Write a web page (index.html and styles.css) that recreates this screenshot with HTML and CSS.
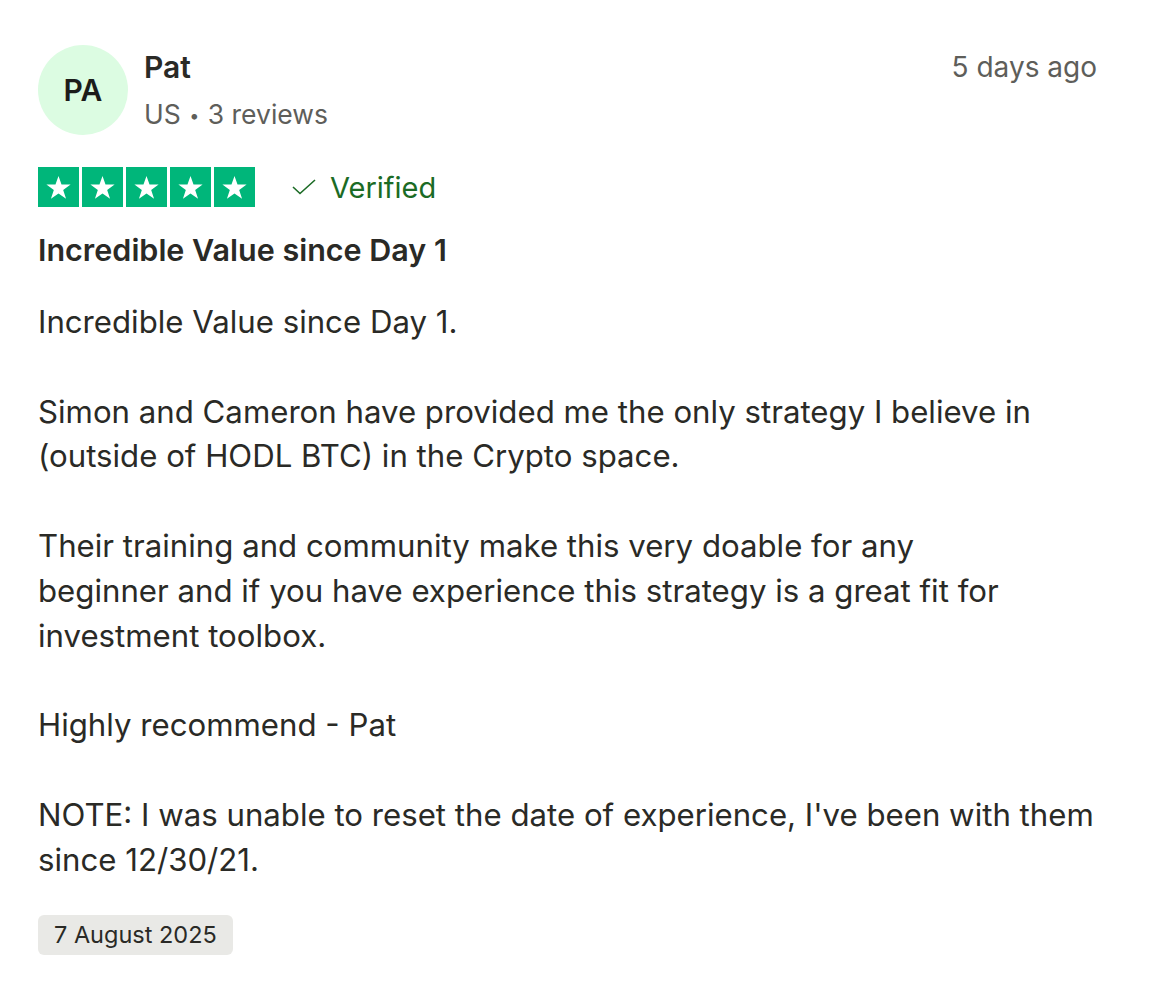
FILE: index.html
```html
<!DOCTYPE html>
<html lang="en">
<head>
<meta charset="utf-8">
<title>Review</title>
<link rel="stylesheet" href="styles.css">
</head>
<body>
<article class="review">
  <header class="head">
    <div class="avatar">PA</div>
    <div class="who">
      <div class="name">Pat</div>
      <div class="meta">US <span class="dot">•</span> 3 reviews</div>
    </div>
    <div class="ago">5 days ago</div>
  </header>
  <div class="rating">
    <div class="stars">
      <span class="star"><svg viewBox="0 0 24 24"><path d="M12 3.6l2.2 6.3h6.6l-5.4 3.9 2.1 6.4L12 16.3l-5.5 3.9 2.1-6.4-5.4-3.9h6.6z"/></svg></span>
      <span class="star"><svg viewBox="0 0 24 24"><path d="M12 3.6l2.2 6.3h6.6l-5.4 3.9 2.1 6.4L12 16.3l-5.5 3.9 2.1-6.4-5.4-3.9h6.6z"/></svg></span>
      <span class="star"><svg viewBox="0 0 24 24"><path d="M12 3.6l2.2 6.3h6.6l-5.4 3.9 2.1 6.4L12 16.3l-5.5 3.9 2.1-6.4-5.4-3.9h6.6z"/></svg></span>
      <span class="star"><svg viewBox="0 0 24 24"><path d="M12 3.6l2.2 6.3h6.6l-5.4 3.9 2.1 6.4L12 16.3l-5.5 3.9 2.1-6.4-5.4-3.9h6.6z"/></svg></span>
      <span class="star"><svg viewBox="0 0 24 24"><path d="M12 3.6l2.2 6.3h6.6l-5.4 3.9 2.1 6.4L12 16.3l-5.5 3.9 2.1-6.4-5.4-3.9h6.6z"/></svg></span>
    </div>
    <div class="verified">
      <svg class="check" viewBox="0 0 24 16"><path d="M1 8l7 6.5L23 1"/></svg>
      <span>Verified</span>
    </div>
  </div>
  <h2 class="title">Incredible Value since Day 1</h2>
  <div class="body">
    <p>Incredible Value since Day 1.</p>
    <p>Simon and Cameron have provided me the only strategy I believe in<br>(outside of HODL BTC) in the Crypto space.</p>
    <p>Their training and community make this very doable for any<br>beginner and if you have experience this strategy is a great fit for<br>investment toolbox.</p>
    <p>Highly recommend - Pat</p>
    <p>NOTE: I was unable to reset the date of experience, I've been with them<br>since 12/30/21.</p>
  </div>
  <div class="date">7 August 2025</div>
</article>
</body>
</html>
```
FILE: styles.css
```css
html, body {
  margin: 0;
  padding: 0;
  background: #ffffff;
}
body {
  font-family: Inter, "Liberation Sans", sans-serif;
  color: #2a2a26;
}
.review {
  padding: 45px 57px 0 38px;
}
.head {
  display: flex;
  align-items: flex-start;
}
.avatar {
  width: 90px;
  height: 90px;
  border-radius: 50%;
  background: #dcfce2;
  display: flex;
  align-items: center;
  justify-content: center;
  font-size: 30px;
  font-weight: 600;
  color: #1c1c1a;
  flex: none;
}
.who {
  margin-left: 16px;
  flex: 1;
}
.name {
  font-size: 30px;
  font-weight: 600;
  line-height: 44px;
}
.meta {
  font-size: 26.5px;
  line-height: 46px;
  margin-top: 2px;
  color: #5e5e5a;
}
.dot {
  font-size: 18px;
  vertical-align: 2px;
  margin: 0 1px;
}
.ago {
  font-size: 28px;
  line-height: 44px;
  color: #5e5e5a;
}
.rating {
  display: flex;
  align-items: center;
  margin-top: 28px;
}
.stars {
  display: flex;
  gap: 3px;
}
.star {
  width: 41px;
  height: 40px;
  background: #00b67a;
  display: flex;
  align-items: center;
  justify-content: center;
}
.star svg {
  width: 33px;
  height: 33px;
  fill: #ffffff;
}
.verified {
  display: flex;
  align-items: center;
  margin-left: 37px;
  color: #1b6b25;
  font-size: 29px;
}
.check {
  width: 24px;
  height: 16px;
  margin-right: 14px;
  fill: none;
  stroke: #1b6b25;
  stroke-width: 1.6;
}
.title {
  margin: 21px 0 0 0;
  font-size: 30.5px;
  font-weight: 600;
  line-height: 44px;
}
.body {
  margin-top: 28px;
  font-size: 31.2px;
  line-height: 44.8px;
  white-space: nowrap;
}
.body p {
  margin: 0 0 44.8px 0;
}
.body p:last-child {
  margin-bottom: 0;
}
.date {
  display: inline-block;
  margin-top: 33px;
  background: #e9e9e6;
  border-radius: 6px;
  padding: 0 16px;
  height: 40px;
  line-height: 40px;
  font-size: 23.5px;
  color: #2a2a26;
}
```
